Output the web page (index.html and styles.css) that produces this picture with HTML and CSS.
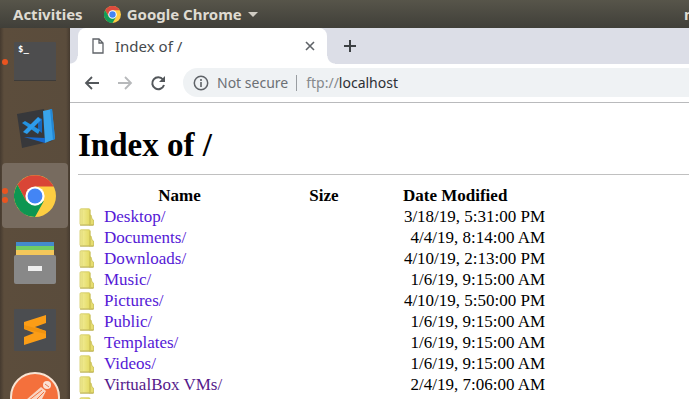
FILE: index.html
```html
<!DOCTYPE html>
<html lang="en">
<head>
<meta charset="utf-8">
<title>Index of /</title>
<link rel="stylesheet" href="styles.css">
</head>
<body>
<svg class="symbols" aria-hidden="true">
  <defs>
    <linearGradient id="paper"><stop offset="0" stop-color="#f4ef9e"/><stop offset="1" stop-color="#e3da62"/></linearGradient>
  </defs>
  <symbol id="folder" viewBox="0 0 16 18">
    <path d="M11 7h2l1 4 1.500 1v5h-4.500z" fill="#e6dd70" stroke="#c9bf55" stroke-width=".8"/>
    <rect x="2" y=".8" width="10" height="16" rx="1" fill="url(#paper)" stroke="#d0c65c" stroke-width=".8"/>
    <path d="M4 1.500v14.500" stroke="#dcd470" stroke-width=".8"/>
    <path d="M12 2v14" stroke="#c4b950" stroke-width=".8"/>
    <path d="M2 17.200h13.500" stroke="#b3a846" stroke-width=".8"/>
  </symbol>
</svg>
<div class="desktop">
  <header class="topbar">
    <button class="topbar-item" type="button">Activities</button>
    <button class="topbar-item app-menu" type="button">
      <svg class="app-icon" viewBox="0 0 48 48" aria-hidden="true">
        <circle cx="24" cy="24" r="24" fill="#fc4"/>
        <path d="M3.200 12A24 24 0 0 1 44.800 12H24L13.600 30z" fill="#dd4b3e"/>
        <path d="M3.200 12A24 24 0 0 0 24 48L34.400 30H13.600z" fill="#129d58"/>
        <circle cx="24" cy="24" r="12" fill="#fff"/><circle cx="24" cy="24" r="9" fill="#4285f4"/>
      </svg>
      <span>Google Chrome</span><span class="caret"></span>
    </button>
    <span class="clock">m</span>
  </header>
  <div class="workspace">
    <nav class="dock" aria-label="Applications">
      <button class="dock-item one-window" type="button" aria-label="Terminal">
        <svg viewBox="0 0 42 42"><rect y="1" width="42" height="39" rx="1" fill="#4d4d4e"/><path d="M0 39h42v1H0z" fill="#3d3b39"/><text x="4" y="11" class="prompt">$_</text></svg>
      </button>
      <button class="dock-item" type="button" aria-label="Visual Studio Code">
        <svg viewBox="0 0 42 42"><path d="M3 6 30 1l8 32-30 7z" fill="#37383b"/><path d="m29 3 9-2 3 30-10 4z" fill="#39a4ec"/><path d="m36 1 2 0 3 30-2 1z" fill="#2386d3"/><path d="m10 29 21 1v5z" fill="#1769cf"/><path d="m24 9 4 2v14l-4-3z" fill="#1668bd"/><path d="m8 15 3-2 15 9-2 4z" fill="#2492df"/><path d="m9 24 15-15 3 3L13 26z" fill="#2d9ceb"/></svg>
      </button>
      <button class="dock-item active two-windows" type="button" aria-label="Google Chrome">
        <svg viewBox="0 0 48 48">
          <circle cx="24" cy="24" r="24" fill="#fdce42"/>
          <path d="M4 11A24 24 0 0 1 45.300 13H24L14 30z" fill="#d94536"/>
          <path d="M4 11A24 24 0 0 0 24 48L34 30H14z" fill="#0d9652"/>
          <circle cx="24" cy="24" r="11" fill="#fff"/><circle cx="24" cy="24" r="8.500" fill="#4385f5"/>
        </svg>
      </button>
      <button class="dock-item" type="button" aria-label="Files">
        <svg viewBox="0 0 42 42"><path d="M2 0h38v5H2z" fill="#438acb"/><path d="M2 4h38v5H2z" fill="#70cc63"/><path d="M2 8h38v6H2z" fill="#f3c75b"/><rect y="13" width="42" height="29" rx="2" fill="#888"/><path d="M14 24h14v5H14z" fill="#eee"/></svg>
      </button>
      <button class="dock-item" type="button" aria-label="Sublime Text">
        <svg viewBox="0 0 42 42"><rect width="42" height="42" rx="1" fill="#4b4d50"/><path d="m10 13 22-7v8l-11 4 11 4v7l-22 7v-8l10-4-10-4z" fill="#fb9d16"/><path d="m10 16 22 6v3l-22-5z" fill="#f0930f"/></svg>
      </button>
      <button class="dock-item postman" type="button" aria-label="Postman">
        <svg viewBox="0 0 50 50"><circle cx="25" cy="25" r="24" fill="#f4703c" stroke="#f7e3d3" stroke-width="2"/><path d="m16 28 15-13 5 4-5 10-8 6-7 1z" fill="#f9d5c3"/><path d="m18 29 14-11M22 32l12-12" stroke="#f4703c"/><circle cx="37" cy="13" r="4" fill="#fae1d4"/><path d="m35 12 4 3" stroke="#e8794f"/></svg>
      </button>
    </nav>
    <main class="browser">
      <div class="tabstrip">
        <div class="tab">
          <svg class="file-icon" viewBox="0 0 12 16"><path d="M1 1h6l4 4v10H1zM7 1v4h4" fill="none" stroke="#5f6368" stroke-width="1.300"/></svg>
          <span class="tab-title">Index of /</span>
          <button class="icon-button" type="button" aria-label="Close tab"><svg class="close-icon" viewBox="0 0 10 10"><path d="m1 1 8 8M9 1 1 9" stroke="#5f6368" stroke-width="1.600"/></svg></button>
        </div>
        <button class="icon-button new-tab" type="button" aria-label="New tab"><svg class="plus-icon" viewBox="0 0 14 14"><path d="M7 1v12M1 7h12" stroke="#3c4043" stroke-width="2"/></svg></button>
      </div>
      <div class="toolbar">
        <button class="icon-button" type="button" aria-label="Back"><svg class="nav-icon" viewBox="0 0 16 16"><path d="M15 8H2M8 2 2 8l6 6" fill="none" stroke="#53575b" stroke-width="1.800"/></svg></button>
        <button class="icon-button" type="button" aria-label="Forward" disabled><svg class="nav-icon" viewBox="0 0 16 16"><path d="M1 8h13M8 2l6 6-6 6" fill="none" stroke="#b7b9bb" stroke-width="1.800"/></svg></button>
        <button class="icon-button" type="button" aria-label="Reload"><svg class="nav-icon" viewBox="0 0 16 16"><path d="M13 4.500A6 6 0 1 0 14 10" fill="none" stroke="#53575b" stroke-width="2"/><path d="M15 1v6H9z" fill="#53575b"/></svg></button>
        <div class="address">
          <svg class="info-icon" viewBox="0 0 16 16"><circle cx="8" cy="8" r="6.700" fill="none" stroke="#5f6368" stroke-width="1.500"/><path d="M8 7v5M8 4v2" stroke="#5f6368" stroke-width="1.600"/></svg>
          <span class="security">Not secure</span>
          <span class="url"><span class="scheme">ftp://</span>localhost</span>
        </div>
      </div>
      <section class="page">
        <h1>Index of /</h1>
        <table>
          <thead><tr><th class="name">Name</th><th class="size">Size</th><th class="date">Date Modified</th></tr></thead>
          <tbody>
            <tr><td><a href="#"><svg class="folder"><use href="#folder"/></svg>Desktop/</a></td><td></td><td>3/18/19, 5:31:00 PM</td></tr>
            <tr><td><a href="#"><svg class="folder"><use href="#folder"/></svg>Documents/</a></td><td></td><td>4/4/19, 8:14:00 AM</td></tr>
            <tr><td><a href="#"><svg class="folder"><use href="#folder"/></svg>Downloads/</a></td><td></td><td>4/10/19, 2:13:00 PM</td></tr>
            <tr><td><a href="#"><svg class="folder"><use href="#folder"/></svg>Music/</a></td><td></td><td>1/6/19, 9:15:00 AM</td></tr>
            <tr><td><a href="#"><svg class="folder"><use href="#folder"/></svg>Pictures/</a></td><td></td><td>4/10/19, 5:50:00 PM</td></tr>
            <tr><td><a href="#"><svg class="folder"><use href="#folder"/></svg>Public/</a></td><td></td><td>1/6/19, 9:15:00 AM</td></tr>
            <tr><td><a href="#"><svg class="folder"><use href="#folder"/></svg>Templates/</a></td><td></td><td>1/6/19, 9:15:00 AM</td></tr>
            <tr><td><a href="#"><svg class="folder"><use href="#folder"/></svg>Videos/</a></td><td></td><td>1/6/19, 9:15:00 AM</td></tr>
            <tr><td><a href="#" class="visited"><svg class="folder"><use href="#folder"/></svg>VirtualBox VMs/</a></td><td></td><td>2/4/19, 7:06:00 AM</td></tr>
            <tr><td><a href="#"><svg class="folder"><use href="#folder"/></svg>calibre/</a></td><td></td><td>3/21/19, 3:38:00 AM</td></tr>
          </tbody>
        </table>
      </section>
    </main>
  </div>
</div>
</body>
</html>
```
FILE: styles.css
```css
* { box-sizing: border-box; }
body { margin: 0; background: #fff; overflow: hidden; }
button { border: 0; padding: 0; background: none; font: inherit; color: inherit; }
svg { display: block; }
.symbols { position: absolute; width: 0; height: 0; }
.desktop { height: calc(100vh - 6px); display: flex; flex-direction: column; overflow: hidden; }
.topbar { flex: none; height: 28px; display: flex; align-items: center; gap: 21px; padding-left: 13px; overflow: hidden; background: linear-gradient(#57554a, #403f39); color: #dfdbd2; font: bold 15px "Noto Sans", sans-serif; }
.topbar-item { flex: none; white-space: nowrap; }
.app-menu { display: flex; align-items: center; gap: 6px; }
.app-icon { width: 17px; height: 17px; }
.caret { border: 5px solid transparent; border-top-color: #d0ccc3; border-bottom: 0; }
.clock { margin-left: auto; width: 5px; }
.workspace { flex: 1; min-height: 0; display: flex; }
.dock { flex: none; width: 70px; padding: 1px 2px; display: flex; flex-direction: column; gap: 2px; overflow: hidden; background: linear-gradient(90deg, #453a2f, #5c4d3c 4px, #5a4c3c 66px, #453a2f); }
.dock-item { flex: none; position: relative; height: 65px; display: grid; place-items: center; border-radius: 4px; }
.dock-item svg { width: 42px; height: 42px; }
.dock-item.active { background: #776b5f; }
.dock-item.postman svg { width: 50px; height: 50px; }
.one-window::before, .two-windows::before, .two-windows::after { content: ""; position: absolute; left: 0; top: 30px; width: 6px; height: 6px; border-radius: 50%; background: #e95420; }
.two-windows::before { top: 25px; }
.two-windows::after { top: 34px; }
.prompt { font: bold 9px "DejaVu Sans Mono", monospace; fill: #fff; }
.browser { flex: 1; min-width: 0; display: flex; flex-direction: column; background: #fff; }
.tabstrip { flex: none; height: 36px; display: flex; align-items: stretch; padding-left: 8px; background: #dcdee7; }
.tab { position: relative; width: 249px; display: flex; align-items: center; gap: 11px; padding: 0 12px 0 14px; border-radius: 8px 8px 0 0; background: #fff; }
.tab::before, .tab::after { content: ""; position: absolute; bottom: 0; width: 8px; height: 8px; }
.tab::before { right: 100%; background: radial-gradient(circle at 0 0, transparent 7px, #fff 8px); }
.tab::after { left: 100%; background: radial-gradient(circle at 100% 0, transparent 7px, #fff 8px); }
.tab-title { flex: 1; color: #45494d; font: 15px "Noto Sans", sans-serif; }
.file-icon { width: 12px; height: 16px; }
.close-icon { width: 10px; height: 10px; }
.icon-button { flex: none; display: grid; place-items: center; }
.new-tab { padding-left: 16px; }
.plus-icon { width: 14px; height: 14px; }
.toolbar { flex: none; height: 39px; display: flex; align-items: center; gap: 17px; padding: 0 0 1px 14px; border-bottom: 1px solid #b9babc; }
.nav-icon { width: 16px; height: 16px; }
.address { flex: 1; height: 29px; display: flex; align-items: center; gap: 8px; padding-left: 10px; border-radius: 15px 0 0 15px; background: #eff2f4; font: 14px "Noto Sans", sans-serif; white-space: nowrap; }
.info-icon { width: 16px; height: 16px; }
.security { color: #6c7074; }
.url { padding-left: 9px; border-left: 1px solid #999da1; line-height: 16px; color: #2d3034; }
.scheme { color: #85898d; }
.page { flex: 1; min-height: 0; overflow: hidden; padding: 22px 0 0 8px; font: 17px "Liberation Serif", serif; color: #000; }
h1 { margin: 0 0 11px; padding-bottom: 9px; border-bottom: 1px solid #c0c0c0; font-size: 33px; line-height: 40px; }
table { border-collapse: collapse; }
th, td { padding: 0; height: 21px; line-height: 21px; white-space: nowrap; }
th { height: 20px; }
thead { line-height: 20px; }
th { line-height: 20px; }
.name { width: 203px; }
.size { width: 86px; }
.date { padding-left: 36px; text-align: left; }
td:last-child { padding-left: 35px; text-align: right; }
a { display: flex; align-items: center; gap: 10px; color: #5519d6; text-decoration: none; }
a.visited { color: #551a8b; }
.folder { width: 16px; height: 18px; }
```
